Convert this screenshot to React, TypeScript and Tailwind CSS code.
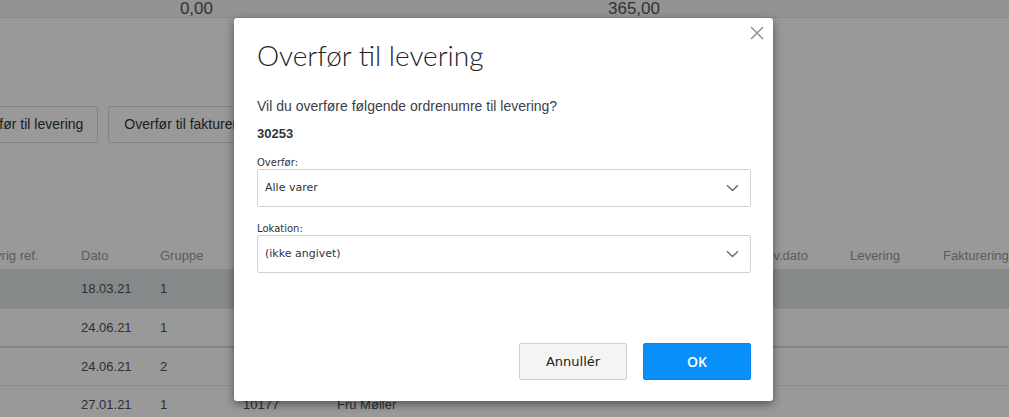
import React from 'react'

const rows = [
  { ref: '', dato: '18.03.21', gruppe: '1', ordre: '', kunde: '', selected: true },
  { ref: '', dato: '24.06.21', gruppe: '1', ordre: '', kunde: '' },
  { ref: '', dato: '24.06.21', gruppe: '2', ordre: '', kunde: '', thick: true },
  { ref: '', dato: '27.01.21', gruppe: '1', ordre: '10177', kunde: 'Fru Møller' },
]

const cols = 'grid grid-cols-[96px_79px_83px_94px_422px_91px_93px_1fr]'

function Chevron() {
  return (
    <svg width="13" height="8" viewBox="0 0 13 8" fill="none" className="shrink-0">
      <path d="M1 1.2 L6.5 6.5 L12 1.2" stroke="#6b6b6b" strokeWidth="1.4" />
    </svg>
  )
}

function SelectBox({ label, value }: { label: string; value: string }) {
  return (
    <div className="flex flex-col">
      <label className="text-[10px] leading-[12px] text-[#333]">{label}</label>
      <div className="h-[38px] flex items-center justify-between pl-[7px] pr-[11px] border border-[#d3d3cb] rounded-[2px] bg-white">
        <span className="text-[11px] text-[#333]">{value}</span>
        <Chevron />
      </div>
    </div>
  )
}

function Background() {
  return (
    <div className="w-full h-[417px] bg-white font-['Liberation_Sans',Arial,sans-serif] overflow-hidden">
      {/* totals strip */}
      <div className="h-[18px] bg-[#f5f5f5] border-b border-[#e6e6e6] flex text-[17px] leading-[17px] text-[#555]">
        <div className="w-[213px] text-right">0,00</div>
        <div className="w-[447px] text-right">365,00</div>
      </div>

      {/* action buttons */}
      <div className="mt-[88px] -ml-[47px] flex gap-[10px] text-[14px] text-[#333]">
        <button className="h-[37px] pl-[15px] pr-[14px] border border-[#dadada] rounded-[2px] bg-white whitespace-nowrap">
          Overfør til levering
        </button>
        <button className="h-[37px] px-[15px] border border-[#dadada] rounded-[2px] bg-white whitespace-nowrap">
          Overfør til fakturering
        </button>
      </div>

      {/* order table */}
      <div className="mt-[100px] -ml-[15px] text-[13px] whitespace-nowrap">
        <div className={`${cols} h-[27px] leading-[26px] text-[#999] border-b border-[#e6e6e6]`}>
          <div>Øvrig ref.</div>
          <div>Dato</div>
          <div>Gruppe</div>
          <div></div>
          <div></div>
          <div>Lev.dato</div>
          <div>Levering</div>
          <div>Fakturering</div>
        </div>
        {rows.map((r, i) => (
          <div
            key={i}
            className={`${cols} h-[38px] leading-[37px] text-[#4a5060] ${r.selected ? 'bg-[#dfe4e4]' : ''} ${
              r.thick ? 'border-t-2 border-[#dcdcdc] h-[39px]' : i > 0 ? 'border-t border-[#e9e9e9]' : ''
            }`}
          >
            <div>{r.ref}</div>
            <div>{r.dato}</div>
            <div>{r.gruppe}</div>
            <div>{r.ordre}</div>
            <div>{r.kunde}</div>
            <div></div>
            <div></div>
            <div></div>
          </div>
        ))}
      </div>
    </div>
  )
}

export default function App() {
  return (
    <div className="relative w-full h-[417px] overflow-hidden">
      <Background />
      <div className="absolute inset-0 bg-black/40 flex pl-[234px]">
        <div className="relative mt-[18px] w-[539px] h-[383px] bg-white rounded-[3px] shadow-[0_3px_10px_rgba(0,0,0,0.45)] pl-[23px] pr-[22px] pt-[20px] flex flex-col">
          <button className="absolute top-[8px] right-[9px] w-[14px] h-[14px]" aria-label="Luk">
            <svg width="14" height="14" viewBox="0 0 14 14">
              <path d="M1 1 L13 13 M13 1 L1 13" stroke="#8a949c" strokeWidth="1.6" />
            </svg>
          </button>

          <h2 className="font-['Lato',sans-serif] font-light text-[28px] leading-[34px] text-[#222]">
            Overfør til levering
          </h2>

          <p className="mt-[24px] font-['Liberation_Sans',Arial,sans-serif] text-[14px] leading-[20px] text-[#3b4049]">
            Vil du overføre følgende ordrenumre til levering?
          </p>
          <p className="mt-[9px] font-['Liberation_Sans',Arial,sans-serif] font-bold text-[13px] leading-[18px] text-[#2f3640]">
            30253
          </p>

          <div className="mt-[14px] flex flex-col gap-[16px] font-['DejaVu_Sans',Verdana,sans-serif]">
            <SelectBox label="Overfør:" value="Alle varer" />
            <SelectBox label="Lokation:" value="(ikke angivet)" />
          </div>

          <div className="mt-[70px] flex justify-end gap-[16px] text-[13px]">
            <button className="w-[108px] h-[37px] bg-[#f4f4f4] border border-[#d0d0d0] rounded-[2px] text-[#222] font-['DejaVu_Sans',Verdana,sans-serif]">
              Annullér
            </button>
            <button className="w-[108px] h-[37px] bg-[#0890fa] border border-[#0a85e6] rounded-[2px] text-white font-['Open_Sans',sans-serif] font-semibold text-[14px]">
              OK
            </button>
          </div>
        </div>
      </div>
    </div>
  )
}
